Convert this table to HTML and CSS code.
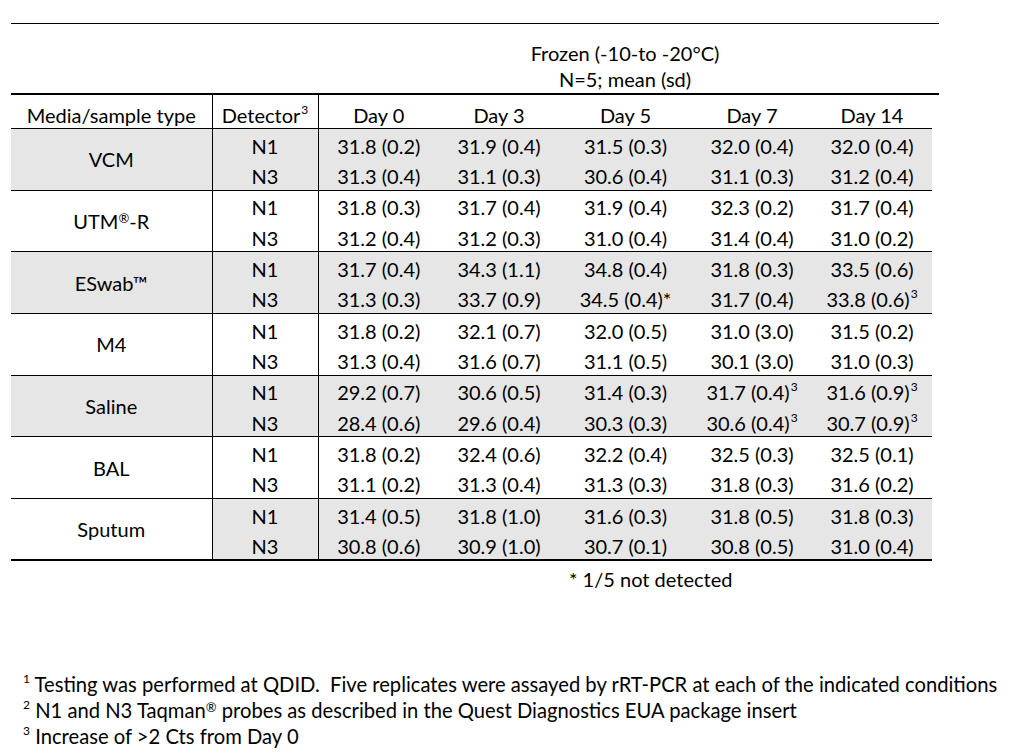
FILE: index.html
```html
<!DOCTYPE html>
<html>
<head>
<meta charset="utf-8">
<title>Frozen stability</title>
<link rel="stylesheet" href="styles.css">
</head>
<body>
<div class="page">
<table class="data">
<colgroup>
<col class="c-media"><col class="c-det"><col class="c-d0"><col class="c-d3"><col class="c-d5"><col class="c-d7"><col class="c-d14"><col class="c-ext">
</colgroup>
<thead>
<tr class="cond">
<th colspan="2"></th>
<th colspan="5" class="cond-label">Frozen (-10-to -20°C)<br>N=5; mean (sd)</th>
<th></th>
</tr>
<tr class="heads">
<th class="media">Media/sample type</th>
<th class="det">Detector<sup class="s">3</sup></th>
<th>Day 0</th><th>Day 3</th><th>Day 5</th><th>Day 7</th><th>Day 14</th>
<th class="ext"></th>
</tr>
</thead>
<tbody class="grp shade">
<tr><td rowspan="2" class="media">VCM</td><td class="det">N1</td><td>31.8 (0.2)</td><td>31.9 (0.4)</td><td>31.5 (0.3)</td><td>32.0 (0.4)</td><td>32.0 (0.4)</td><td class="ext"></td></tr>
<tr><td class="det">N3</td><td>31.3 (0.4)</td><td>31.1 (0.3)</td><td>30.6 (0.4)</td><td>31.1 (0.3)</td><td>31.2 (0.4)</td><td class="ext"></td></tr>
</tbody>
<tbody class="grp">
<tr><td rowspan="2" class="media">UTM<span class="reg">®</span>-R</td><td class="det">N1</td><td>31.8 (0.3)</td><td>31.7 (0.4)</td><td>31.9 (0.4)</td><td>32.3 (0.2)</td><td>31.7 (0.4)</td><td class="ext"></td></tr>
<tr><td class="det">N3</td><td>31.2 (0.4)</td><td>31.2 (0.3)</td><td>31.0 (0.4)</td><td>31.4 (0.4)</td><td>31.0 (0.2)</td><td class="ext"></td></tr>
</tbody>
<tbody class="grp shade">
<tr><td rowspan="2" class="media">ESwab™</td><td class="det">N1</td><td>31.7 (0.4)</td><td>34.3 (1.1)</td><td>34.8 (0.4)</td><td>31.8 (0.3)</td><td>33.5 (0.6)</td><td class="ext"></td></tr>
<tr><td class="det">N3</td><td>31.3 (0.3)</td><td>33.7 (0.9)</td><td>34.5 (0.4)*</td><td>31.7 (0.4)</td><td>33.8 (0.6)<sup class="s">3</sup></td><td class="ext"></td></tr>
</tbody>
<tbody class="grp">
<tr><td rowspan="2" class="media">M4</td><td class="det">N1</td><td>31.8 (0.2)</td><td>32.1 (0.7)</td><td>32.0 (0.5)</td><td>31.0 (3.0)</td><td>31.5 (0.2)</td><td class="ext"></td></tr>
<tr><td class="det">N3</td><td>31.3 (0.4)</td><td>31.6 (0.7)</td><td>31.1 (0.5)</td><td>30.1 (3.0)</td><td>31.0 (0.3)</td><td class="ext"></td></tr>
</tbody>
<tbody class="grp shade">
<tr><td rowspan="2" class="media">Saline</td><td class="det">N1</td><td>29.2 (0.7)</td><td>30.6 (0.5)</td><td>31.4 (0.3)</td><td>31.7 (0.4)<sup class="s">3</sup></td><td>31.6 (0.9)<sup class="s">3</sup></td><td class="ext"></td></tr>
<tr><td class="det">N3</td><td>28.4 (0.6)</td><td>29.6 (0.4)</td><td>30.3 (0.3)</td><td>30.6 (0.4)<sup class="s">3</sup></td><td>30.7 (0.9)<sup class="s">3</sup></td><td class="ext"></td></tr>
</tbody>
<tbody class="grp">
<tr><td rowspan="2" class="media">BAL</td><td class="det">N1</td><td>31.8 (0.2)</td><td>32.4 (0.6)</td><td>32.2 (0.4)</td><td>32.5 (0.3)</td><td>32.5 (0.1)</td><td class="ext"></td></tr>
<tr><td class="det">N3</td><td>31.1 (0.2)</td><td>31.3 (0.4)</td><td>31.3 (0.3)</td><td>31.8 (0.3)</td><td>31.6 (0.2)</td><td class="ext"></td></tr>
</tbody>
<tbody class="grp shade last">
<tr><td rowspan="2" class="media plain">Sputum</td><td class="det">N1</td><td>31.4 (0.5)</td><td>31.8 (1.0)</td><td>31.6 (0.3)</td><td>31.8 (0.5)</td><td>31.8 (0.3)</td><td class="ext"></td></tr>
<tr><td class="det">N3</td><td>30.8 (0.6)</td><td>30.9 (1.0)</td><td>30.7 (0.1)</td><td>30.8 (0.5)</td><td>31.0 (0.4)</td><td class="ext"></td></tr>
</tbody>
<tfoot>
<tr class="note"><td colspan="4"></td><td colspan="4" class="note-text">* 1/5 not detected</td></tr>
</tfoot>
</table>

<div class="footnotes">
<p><sup class="fn">1</sup> Testing was performed at QDID.&nbsp; Five replicates were assayed by rRT-PCR at each of the indicated conditions</p>
<p><sup class="fn">2</sup> N1 and N3 Taqman<span class="reg">®</span> probes as described in the Quest Diagnostics EUA package insert</p>
<p><sup class="fn">3</sup> Increase of &gt;2 Cts from Day 0</p>
</div>
</div>
</body>
</html>
```

FILE: styles.css
```css
html, body {
  margin: 0;
  padding: 0;
  background: #ffffff;
}

body {
  font-family: Lato, "Open Sans", "DejaVu Sans", sans-serif;
  color: #000000;
}

.page {
  padding: 23px 0 0 11px;
}

table.data {
  border-collapse: collapse;
  table-layout: fixed;
  width: 928px;
  font-size: 20px;
}

.c-media { width: 201px; }
.c-det { width: 106px; }
.c-d0 { width: 121px; }
.c-d3 { width: 120px; }
.c-d5 { width: 133px; }
.c-d7 { width: 120px; }
.c-d14 { width: 120px; }
.c-ext { width: 7px; }

th, td {
  padding: 0;
  text-align: center;
  font-weight: normal;
  white-space: nowrap;
}

.cond th {
  height: 68px;
  border-top: 1px solid #000;
  border-bottom: 2px solid #000;
  vertical-align: bottom;
}

.cond-label {
  line-height: 26px;
  padding-bottom: 1px;
}

.heads th {
  height: 27px;
  padding-top: 6px;
  border-bottom: 1px solid #000;
  vertical-align: middle;
  line-height: 22px;
}

.heads th.ext {
  border-bottom: none;
}

.media {
  border-right: 1px solid #000;
}

.det {
  border-right: 1px solid #000;
}

.grp tr {
  height: 30.85px;
}

.grp td {
  line-height: 22px;
  padding-top: 3px;
  vertical-align: middle;
}

.grp td.media {
  padding-top: 0;
}

.grp tr:first-child td {
  border-top: 1px solid #000;
}

.grp tr:first-child td.ext {
  border-top: none;
}

.shade td {
  background: #e6e6e6;
}

.shade td.ext,
.shade td.plain {
  background: #ffffff;
}

.last tr:last-child td,
.last td.media {
  border-bottom: 2px solid #000;
}

.last tr:last-child td.ext {
  border-bottom: none;
}

.s {
  font-size: 12px;
  line-height: 0;
  vertical-align: 9px;
  margin-left: 1px;
}

.reg {
  font-size: 13px;
  vertical-align: 6px;
  line-height: 0;
}

.note td {
  height: 32px;
  padding-top: 2px;
}

.note-text {
  text-align: left;
  padding-left: 10px;
}

.footnotes {
  margin-top: 76px;
  padding-left: 12px;
  font-size: 20.2px;
}

.footnotes p {
  margin: 0;
  line-height: 26px;
  white-space: nowrap;
}

.fn {
  font-size: 12px;
  line-height: 0;
  vertical-align: 9px;
}
```
